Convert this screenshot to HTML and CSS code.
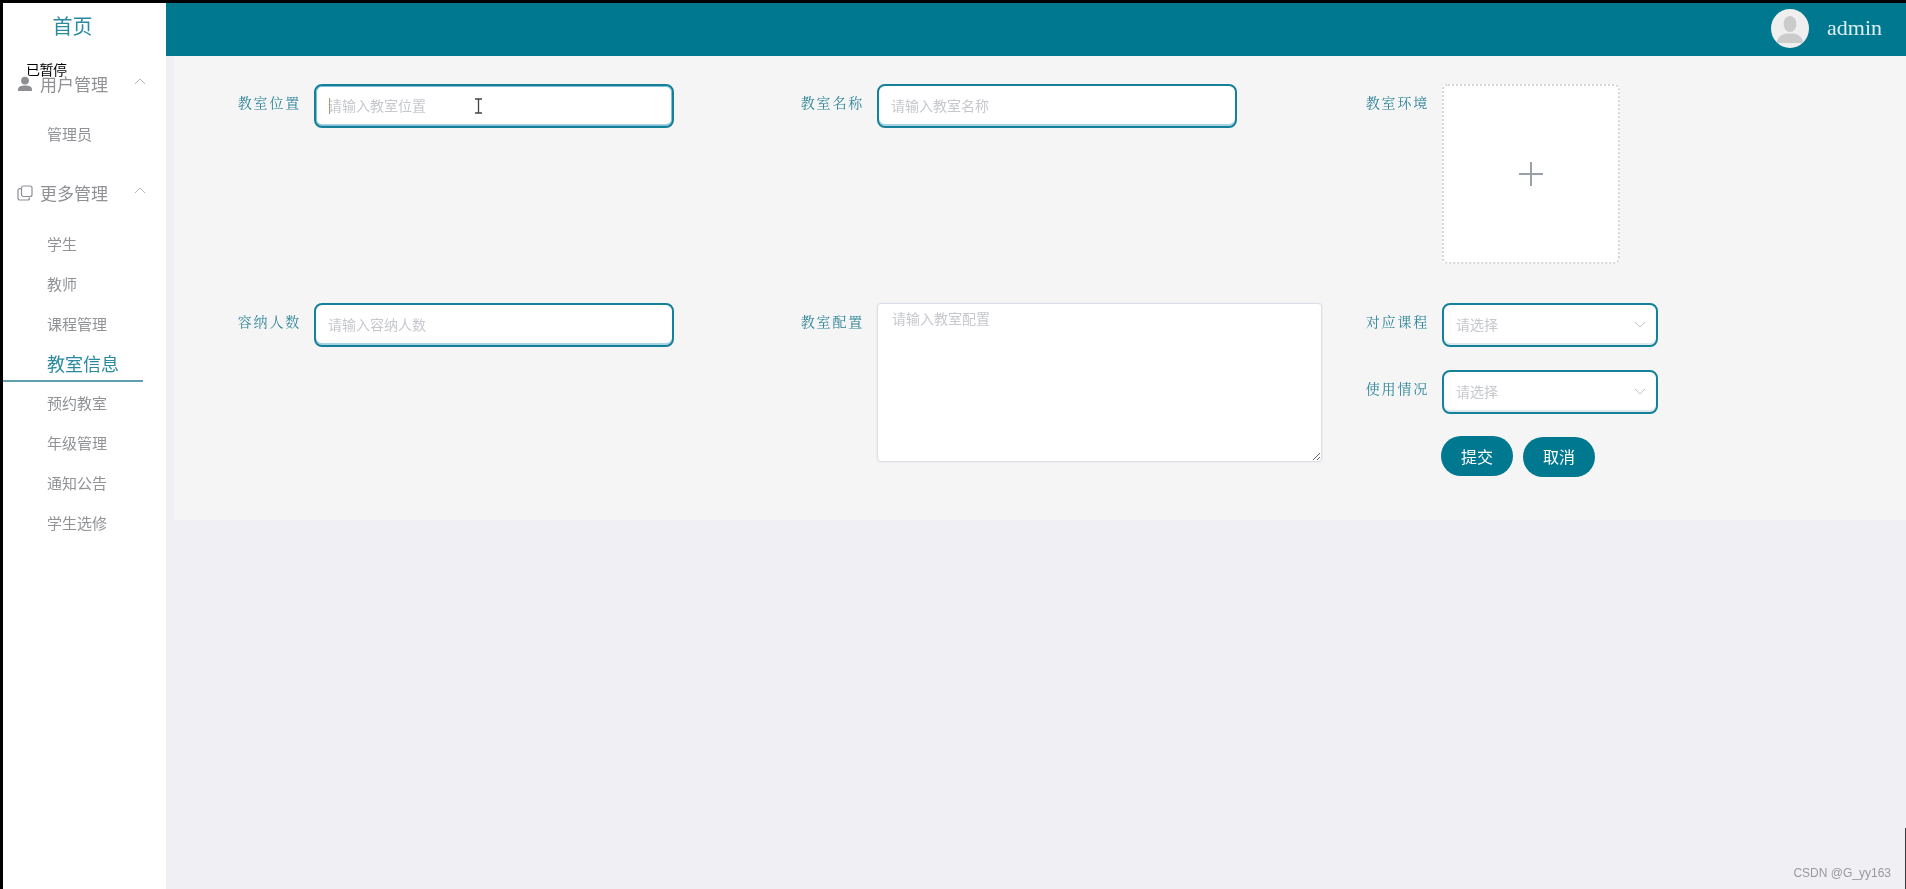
FILE: index.html
```html
<!DOCTYPE html>
<html lang="zh-CN">
<head>
    <meta charset="UTF-8">
    <title>教室信息</title>
    <link rel="stylesheet" href="styles.css">
</head>
<body>
    <aside class="sidebar">
        <div class="brand">首页</div>
        <span class="paused">已暂停</span>

        <!-- Menu -->
        <div class="menu-group">
            <svg class="menu-icon" width="16" height="16" viewBox="0 0 16 16"><circle cx="8" cy="4.6" r="3.9" fill="#8d8f93"/><path d="M1 15v-1.6c0-2.4 2.6-3.9 7-3.9s7 1.5 7 3.9V15z" fill="#8d8f93"/></svg>
            <span class="menu-title">用户管理</span>
            <svg class="chevron" width="12" height="7" viewBox="0 0 12 7"><path d="M1 6l5-5 5 5" fill="none" stroke="#b4b6ba" stroke-width="1"/></svg>
        </div>
        <a class="menu-item first">管理员</a>

        <div class="menu-group second">
            <svg class="menu-icon" width="16" height="16" viewBox="0 0 16 16"><rect x="4.5" y="1" width="10.5" height="10.5" rx="2" fill="none" stroke="#8d8f93" stroke-width="1.2"/><path d="M4 3.6H3a2 2 0 0 0-2 2V13a2 2 0 0 0 2 2h7.5a2 2 0 0 0 2-2v-.6" fill="none" stroke="#8d8f93" stroke-width="1.2"/></svg>
            <span class="menu-title">更多管理</span>
            <svg class="chevron" width="12" height="7" viewBox="0 0 12 7"><path d="M1 6l5-5 5 5" fill="none" stroke="#b4b6ba" stroke-width="1"/></svg>
        </div>
        <a class="menu-item first lower">学生</a>
        <a class="menu-item">教师</a>
        <a class="menu-item">课程管理</a>
        <a class="menu-item active">教室信息</a>
        <a class="menu-item">预约教室</a>
        <a class="menu-item">年级管理</a>
        <a class="menu-item">通知公告</a>
        <a class="menu-item">学生选修</a>
    </aside>

    <div class="main">
        <header class="topbar">
            <div class="avatar">
                <svg width="26" height="28" viewBox="0 0 26 28"><ellipse cx="13" cy="9" rx="6.4" ry="8" fill="#cbcbcb"/><path d="M0 28c0-6 5-8.500 9-9.500h8c4 1 9 3.500 9 9.500z" fill="#cbcbcb"/></svg>
            </div>
            <span class="username">admin</span>
        </header>

        <!-- Classroom form -->
        <form class="panel">
            <div class="field">
                <label>教室位置</label>
                <div class="input-wrap">
                    <input class="input focused" type="text" placeholder="请输入教室位置">
                    <span class="caret"></span>
                    <svg class="ibeam" width="9" height="16" viewBox="0 0 9 16"><path d="M1 1h7M4.500 1v14M1 15h7" fill="none" stroke="#444" stroke-width="1.300"/></svg>
                </div>
            </div>
            <div class="field">
                <label>教室名称</label>
                <input class="input" type="text" placeholder="请输入教室名称">
            </div>
            <div class="field">
                <label>教室环境</label>
                <div class="upload">
                    <svg width="24" height="24" viewBox="0 0 24 24"><path d="M12 0v24M0 12h24" stroke="#9aa0aa" stroke-width="2"/></svg>
                </div>
            </div>

            <div class="field">
                <label>容纳人数</label>
                <input class="input" type="text" placeholder="请输入容纳人数">
            </div>
            <div class="field">
                <label>教室配置</label>
                <textarea class="textarea" placeholder="请输入教室配置"></textarea>
            </div>
            <div class="side-stack">
                <div class="field">
                    <label>对应课程</label>
                    <div class="select">
                        <span>请选择</span>
                        <svg width="12" height="7" viewBox="0 0 12 7"><path d="M1 1l5 5 5-5" fill="none" stroke="#c0c4cc" stroke-width="1"/></svg>
                    </div>
                </div>
                <div class="field">
                    <label>使用情况</label>
                    <div class="select">
                        <span>请选择</span>
                        <svg width="12" height="7" viewBox="0 0 12 7"><path d="M1 1l5 5 5-5" fill="none" stroke="#c0c4cc" stroke-width="1"/></svg>
                    </div>
                </div>
                <div class="actions">
                    <button type="button" class="btn">提交</button>
                    <button type="button" class="btn cancel">取消</button>
                </div>
            </div>
        </form>
    </div>

    <span class="watermark">CSDN @G_yy163</span>
    <span class="edge-line"></span>
</body>
</html>
```

FILE: styles.css
```css
* {
    box-sizing: border-box;
}
html, body {
    height: 100%;
}
html {
    background-color: #efeff4;
}
body {
    margin: 0;
    display: flex;
    overflow: hidden;
    border-left: 3px solid #000;
    border-top: 3px solid #000;
    background-color: #efeff4;
    font-family: "Noto Sans CJK SC", "Liberation Sans", sans-serif;
    filter: blur(0.4px);
}

/* Sidebar */
.sidebar {
    position: relative;
    width: 163px;
    flex-shrink: 0;
    background: #fff;
}
.brand {
    height: 46px;
    text-align: center;
    margin-right: 24px;
    font-size: 20px;
    line-height: 46px;
    color: #2a8a9f;
}
.paused {
    position: absolute;
    left: 23px;
    top: 58px;
    width: 42px;
    font-size: 14px;
    line-height: 16px;
    letter-spacing: -0.500px;
    white-space: nowrap;
    color: #000;
    text-shadow: 1px 0 0 #fff, -1px 0 0 #fff, 0 1px 0 #fff, 0 -1px 0 #fff;
}
.menu-group {
    display: flex;
    align-items: center;
    height: 24px;
    margin-top: 23px;
    padding-left: 14px;
    color: #8f9195;
}
.menu-group.second {
    margin-top: 27px;
}
.menu-title {
    margin-left: 7px;
    font-size: 17px;
    line-height: 24px;
}
.chevron {
    margin-left: 26px;
    margin-bottom: 6px;
}
.menu-item {
    display: block;
    height: 40px;
    padding-left: 44px;
    font-size: 15px;
    line-height: 40px;
    color: #909296;
}
.menu-item.first {
    margin-top: 18px;
}
.menu-item.lower {
    margin-top: 19px;
}
.menu-item.active {
    width: 140px;
    height: 38px;
    margin-bottom: 1px;
    padding-left: 44px;
    border-bottom: 2px solid #5f9fad;
    font-size: 18px;
    line-height: 38px;
    color: #2a8a9f;
}

/* Header */
.main {
    flex: 1;
    min-width: 0;
}
.topbar {
    display: flex;
    align-items: center;
    justify-content: flex-end;
    height: 53px;
    padding: 0 24px 3px 0;
    background-color: #007890;
}
.avatar {
    display: flex;
    align-items: flex-end;
    justify-content: center;
    width: 38px;
    height: 39px;
    padding-bottom: 5px;
    border-radius: 50%;
    background: #efefef;
}
.username {
    margin-left: 18px;
    font-family: "Liberation Serif", serif;
    font-size: 22px;
    color: #dceff3;
}

/* Form panel */
.panel {
    display: grid;
    grid-template-columns: 563px 565px 1fr;
    grid-template-rows: 180px auto;
    row-gap: 39px;
    height: 464px;
    margin-left: 8px;
    padding: 28px 0 0 60px;
    background-color: #f5f5f5;
}
.field {
    display: flex;
    align-items: flex-start;
}
.field label {
    width: 80px;
    padding-right: 13px;
    text-align: right;
    font-family: "Noto Serif CJK SC", "Noto Sans CJK SC", serif;
    font-size: 14px;
    line-height: 36px;
    letter-spacing: 1.800px;
    white-space: nowrap;
    color: #2f8599;
}
.input-wrap {
    position: relative;
}
.input {
    display: block;
    width: 360px;
    height: 44px;
    padding: 0 12px 2px;
    border: 2px solid #14809a;
    border-radius: 8px;
    box-shadow: inset 0 -2px 0 #a9d3e2;
    background: #fff;
    outline: none;
    font-family: inherit;
    font-size: 14px;
}
.input.focused {
    box-shadow: inset 0 0 0 1px #7fc0d6, inset 0 -2px 0 #a9d3e2;
}
.input::placeholder, .textarea::placeholder {
    color: #c6c8cd;
}
.caret {
    position: absolute;
    left: 15px;
    top: 14px;
    width: 1px;
    height: 16px;
    background: #a89a80;
}
.ibeam {
    position: absolute;
    left: 160px;
    top: 14px;
}
.upload {
    display: flex;
    align-items: center;
    justify-content: center;
    width: 178px;
    height: 180px;
    border: 2px dotted #d6d6d6;
    border-radius: 6px;
    background: #fff;
}
.textarea {
    display: block;
    width: 445px;
    height: 159px;
    padding: 4px 14px;
    border: 1px solid #dcdfe6;
    box-shadow: 0 0 0 1px #eceef1;
    border-radius: 4px;
    background: #fff;
    outline: none;
    font-family: inherit;
    font-size: 14px;
    line-height: 20px;
}
.side-stack {
    display: flex;
    flex-direction: column;
    gap: 23px;
}
.select {
    display: flex;
    align-items: center;
    justify-content: space-between;
    width: 216px;
    height: 44px;
    padding: 0 10px 2px 12px;
    border: 2px solid #14809a;
    border-radius: 8px;
    box-shadow: inset 0 -2px 0 #dde9ec;
    background: #fff;
    font-size: 14px;
    color: #c6c8cd;
}
.actions {
    display: flex;
    align-items: flex-start;
    gap: 10px;
    margin-top: -1px;
    margin-left: 79px;
}
.btn {
    width: 72px;
    height: 40px;
    padding: 0;
    border: none;
    border-radius: 20px;
    background-color: #007890;
    color: #fff;
    font-family: inherit;
    font-size: 16px;
    cursor: pointer;
}
.btn.cancel {
    margin-top: 1px;
    padding-bottom: 2px;
}

/* Screen capture leftovers */
.watermark {
    position: absolute;
    right: 15px;
    bottom: 9px;
    font-family: "Liberation Sans", sans-serif;
    font-size: 12px;
    color: #9a9a9e;
}
.edge-line {
    position: absolute;
    right: 0;
    bottom: 0;
    width: 1px;
    height: 61px;
    background: #3a3a40;
}
```
